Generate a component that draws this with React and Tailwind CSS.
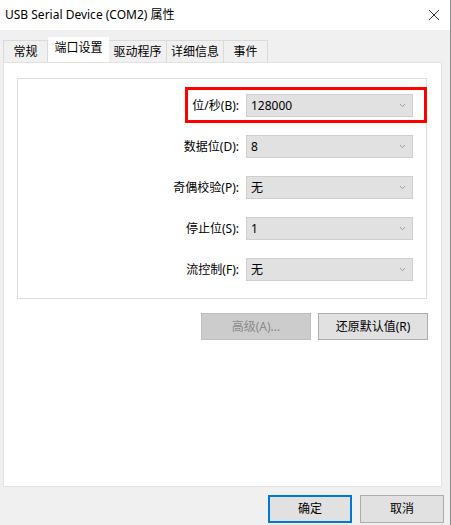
import React from "react"

const rows = [
  { label: "位/秒(B):", value: "128000" },
  { label: "数据位(D):", value: "8" },
  { label: "奇偶校验(P):", value: "无" },
  { label: "停止位(S):", value: "1" },
  { label: "流控制(F):", value: "无" },
]

const tabs = ["常规", "端口设置", "驱动程序", "详细信息", "事件"]
const tabWidths = ["w-[45px]", "w-[61px]", "w-[58px]", "w-[57px]", "w-[44px]"]

function Chevron() {
  return (
    <svg width="7" height="5" viewBox="0 0 7 5" className="text-[#9a9a9a]">
      <path d="M1 1.2 L3.5 3.6 L6 1.2" fill="none" stroke="currentColor" strokeWidth="1" />
    </svg>
  )
}

function ComboRow({ label, value }) {
  return (
    <div className="flex items-center h-[23px]">
      <div className="w-[228px] text-right pr-[7px] text-[12px] text-black">{label}</div>
      <div className="w-[167px] h-[23px] bg-[#e1e1e1] border border-[#cfcfcf] flex items-center justify-between pl-[4px] pr-[6px] text-[12px] text-black">
        <span>{value}</span>
        <Chevron />
      </div>
    </div>
  )
}

export default function App() {
  return (
    <div
      className="relative w-[451px] h-[525px] bg-[#f0f0f0] flex flex-col border-r border-[#8c8c8c] overflow-hidden"
      style={{ fontFamily: '"Noto Sans", "Noto Sans CJK SC", sans-serif' }}
    >
      {/* title bar */}
      <div className="h-[30px] bg-white flex items-center justify-between pl-[5px] pr-[10px] shrink-0">
        <span className="text-[12px] text-black">USB Serial Device (COM2) 属性</span>
        <svg width="12" height="12" viewBox="0 0 12 12">
          <path d="M1 1 L11 11 M11 1 L1 11" stroke="#333" strokeWidth="1" />
        </svg>
      </div>

      {/* tabs */}
      <div className="mt-[7px] pl-[3px] flex items-end h-[25px] shrink-0">
        {tabs.map((t, i) =>
          i === 1 ? (
            <div key={t} className={`${tabWidths[i]} h-[25px] bg-white flex items-center justify-center text-[12px] text-black pb-[3px]`}>
              {t}
            </div>
          ) : (
            <div
              key={t}
              className={`${tabWidths[i]} h-[22px] bg-[#f0f0f0] border-t border-r border-[#dadada] flex items-center justify-center text-[12px] text-black ${i === 0 ? "border-l" : ""}`}
            >
              {t}
            </div>
          )
        )}
      </div>

      {/* tab panel */}
      <div className="ml-[3px] w-[439px] h-[425px] bg-white border border-[#e3e3e3] pt-[15px] pl-[13px] shrink-0">
        <div className="w-[410px] h-[221px] border border-[#dddddd] pt-[15px] flex flex-col gap-[18px]">
          {rows.map((r) => (
            <ComboRow key={r.label} {...r} />
          ))}
        </div>
        <div className="w-[411px] flex justify-end gap-[7px] mt-[14px]">
          <div className="w-[110px] h-[27px] bg-[#cccccc] border border-[#bfbfbf] flex items-center justify-center text-[12px] text-[#8a8a8a]">
            高级(A)...
          </div>
          <div className="w-[110px] h-[27px] bg-[#e1e1e1] border border-[#adadad] flex items-center justify-center text-[12px] text-black">
            还原默认值(R)
          </div>
        </div>
      </div>

      {/* bottom buttons */}
      <div className="flex justify-end gap-[8px] mt-[8px] pr-[6px]">
        <div className="w-[84px] h-[28px] bg-[#e1e1e1] border-2 border-[#0078d7] flex items-center justify-center text-[12px] text-black">
          确定
        </div>
        <div className="w-[84px] h-[28px] bg-[#e1e1e1] border border-[#adadad] flex items-center justify-center text-[12px] text-black">
          取消
        </div>
      </div>

      {/* red highlight annotation */}
      <div className="absolute left-[185px] top-[87px] w-[242px] h-[36px] border-[3px] border-[#ff0000] pointer-events-none" />
    </div>
  )
}
